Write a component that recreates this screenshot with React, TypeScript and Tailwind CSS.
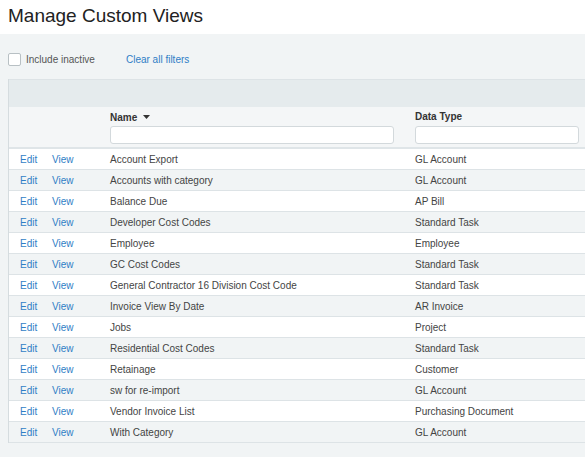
const views = [
  ["Account Export", "GL Account"],
  ["Accounts with category", "GL Account"],
  ["Balance Due", "AP Bill"],
  ["Developer Cost Codes", "Standard Task"],
  ["Employee", "Employee"],
  ["GC Cost Codes", "Standard Task"],
  ["General Contractor 16 Division Cost Code", "Standard Task"],
  ["Invoice View By Date", "AR Invoice"],
  ["Jobs", "Project"],
  ["Residential Cost Codes", "Standard Task"],
  ["Retainage", "Customer"],
  ["sw for re-import", "GL Account"],
  ["Vendor Invoice List", "Purchasing Document"],
  ["With Category", "GL Account"],
];

export default function App() {
  return (
    <div className="w-[585px] h-[457px] overflow-hidden bg-[#f1f4f5] font-['Liberation_Sans',Arial,sans-serif] text-[#444]">
      <div className="h-[34px] bg-white pl-2 pt-[4px]">
        <h1 className="text-[19px] leading-[24px] text-[#222]">Manage Custom Views</h1>
      </div>

      <div className="flex items-center h-[45px] pt-[5px] pl-2 text-[10px]">
        <span className="w-[13px] h-[13px] bg-white border border-[#b8c0c4] rounded-[2px]" />
        <span className="ml-[5px] text-[#555]">Include inactive</span>
        <a className="ml-[31px] text-[#2f7ec6]">Clear all filters</a>
      </div>

      <div className="ml-2 w-[600px] border-l border-[#d5dcdf]">
        <div className="h-[28px] bg-[#e5ebed] border-t border-[#dde3e6]" />
        <div className="flex h-[42px] bg-[#f4f6f7] border-b-2 border-[#dfe5e8] text-[10px] font-bold text-[#333]">
          <div className="w-[101px]" />
          <div className="w-[305px] pt-[4px]">
            <div className="flex items-center h-[12px]">
              Name
              <svg width="7" height="4" viewBox="0 0 7 4" className="ml-[6px]">
                <path d="M0 0h7L3.5 4z" fill="#333" />
              </svg>
            </div>
            <div className="mt-[3px] w-[284px] h-[18px] bg-white border border-[#d3d9dc] rounded-[3px]" />
          </div>
          <div className="pt-[4px]">
            <div className="h-[12px] leading-[12px]">Data Type</div>
            <div className="mt-[3px] w-[164px] h-[18px] bg-white border border-[#d3d9dc] rounded-[3px]" />
          </div>
        </div>
        {views.map(([name, type], i) => (
          <div
            key={name}
            className={`flex items-center h-[21px] border-b border-[#dde3e6] text-[10px] ${
              i % 2 === 0 ? "bg-white" : "bg-[#f1f4f5]"
            }`}
          >
            <a className="w-[32px] pl-[11px] text-[#2f7ec6]">Edit</a>
            <a className="w-[69px] pl-[11px] text-[#2f7ec6]">View</a>
            <div className="w-[305px]">{name}</div>
            <div>{type}</div>
          </div>
        ))}
      </div>
    </div>
  );
}
